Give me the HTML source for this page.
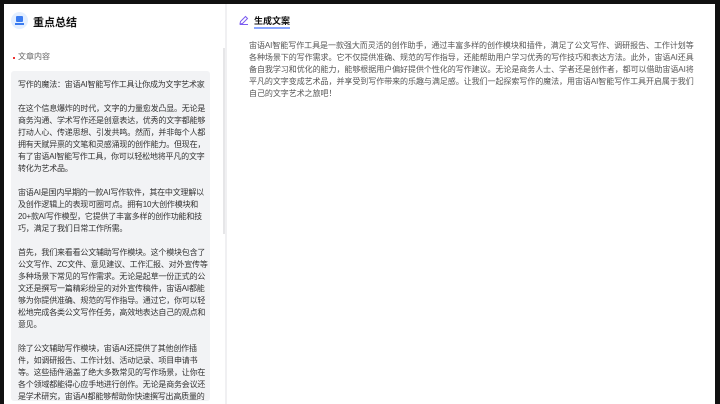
<!DOCTYPE html>
<html><head><meta charset="utf-8"><style>
*{margin:0;padding:0;box-sizing:border-box}
body{width:720px;height:404px;background:#111;position:relative;overflow:hidden;font-family:"Liberation Sans","Noto Sans CJK SC",sans-serif}
.left{position:absolute;left:4px;top:4px;width:221px;height:400px;background:#fff}
.sep{position:absolute;left:225px;top:4px;width:2px;height:400px;background:#f0f0f2}
.right{position:absolute;left:227px;top:4px;width:488px;height:400px;background:#fff}
.icon{position:absolute;left:7px;top:8px;width:17px;height:17px;border-radius:50%;background:#e3efff}
.icon i{position:absolute;left:5px;top:4px;width:7px;height:6px;background:#3a7bf0;border-radius:1px}
.icon b{position:absolute;left:4px;top:11px;width:9px;height:2px;background:#3a7bf0}
.title{position:absolute;left:29px;top:10px;font-size:11px;font-weight:bold;color:#111}
.lab{position:absolute;left:14px;top:48px;font-size:8px;color:#666;line-height:10px}
.dot{position:absolute;left:9px;top:53px;width:2px;height:2px;background:#e33}
.box{position:absolute;left:7px;top:67px;width:199px;height:330px;background:#f2f3f5;border-radius:3px;padding:8px 0 0 7px;font-size:8px;letter-spacing:-0.2px;line-height:12px;color:#333;white-space:nowrap;overflow:hidden}
.sb{position:absolute;left:219px;top:44px;width:3px;height:186px;background:#e6e6e8}
.rt{position:absolute;left:22px;top:36px;font-size:8px;letter-spacing:-0.05px;line-height:12px;color:#555;white-space:nowrap}
.gen{position:absolute;left:27px;top:10px;font-size:9px;font-weight:bold;color:#111;border-bottom:2px solid #8aa6ff}
</style></head><body>
<div class="left">
<div class="icon"><i></i><b></b></div>
<div class="title">重点总结</div>
<div class="dot"></div><div class="lab">文章内容</div>
<div class="box">写作的魔法：宙语AI智能写作工具让你成为文字艺术家<br><br>在这个信息爆炸的时代，文字的力量愈发凸显。无论是<br>商务沟通、学术写作还是创意表达，优秀的文字都能够<br>打动人心、传递思想、引发共鸣。然而，并非每个人都<br>拥有天赋异禀的文笔和灵感涌现的创作能力。但现在，<br>有了宙语AI智能写作工具，你可以轻松地将平凡的文字<br>转化为艺术品。<br><br>宙语AI是国内早期的一款AI写作软件，其在中文理解以<br>及创作逻辑上的表现可圈可点。拥有10大创作模块和<br>20+款AI写作模型，它提供了丰富多样的创作功能和技<br>巧，满足了我们日常工作所需。<br><br>首先，我们来看看公文辅助写作模块。这个模块包含了<br>公文写作、ZC文件、意见建议、工作汇报、对外宣传等<br>多种场景下常见的写作需求。无论是起草一份正式的公<br>文还是撰写一篇精彩纷呈的对外宣传稿件，宙语AI都能<br>够为你提供准确、规范的写作指导。通过它，你可以轻<br>松地完成各类公文写作任务，高效地表达自己的观点和<br>意见。<br><br>除了公文辅助写作模块，宙语AI还提供了其他创作插<br>件，如调研报告、工作计划、活动记录、项目申请书<br>等。这些插件涵盖了绝大多数常见的写作场景，让你在<br>各个领域都能得心应手地进行创作。无论是商务会议还<br>是学术研究，宙语AI都能够帮助你快速撰写出高质量的</div>
<div class="sb"></div>
</div>
<div class="sep"></div>
<div class="right">
<svg style="position:absolute;left:12px;top:11px" width="10" height="10" viewBox="0 0 10 10"><path d="M1 9 L1.5 6.5 L6.5 1.5 L8.5 3.5 L3.5 8.5 Z M1 9.5 H9" fill="none" stroke="#7b5cf0" stroke-width="1"/></svg>
<div class="gen">生成文案</div>
<div class="rt">宙语AI智能写作工具是一款强大而灵活的创作助手，通过丰富多样的创作模块和插件，满足了公文写作、调研报告、工作计划等<br>各种场景下的写作需求。它不仅提供准确、规范的写作指导，还能帮助用户学习优秀的写作技巧和表达方法。此外，宙语AI还具<br>备自我学习和优化的能力，能够根据用户偏好提供个性化的写作建议。无论是商务人士、学者还是创作者，都可以借助宙语AI将<br>平凡的文字变成艺术品，并享受到写作带来的乐趣与满足感。让我们一起探索写作的魔法，用宙语AI智能写作工具开启属于我们<br>自己的文字艺术之旅吧！</div>
</div>
</body></html>
